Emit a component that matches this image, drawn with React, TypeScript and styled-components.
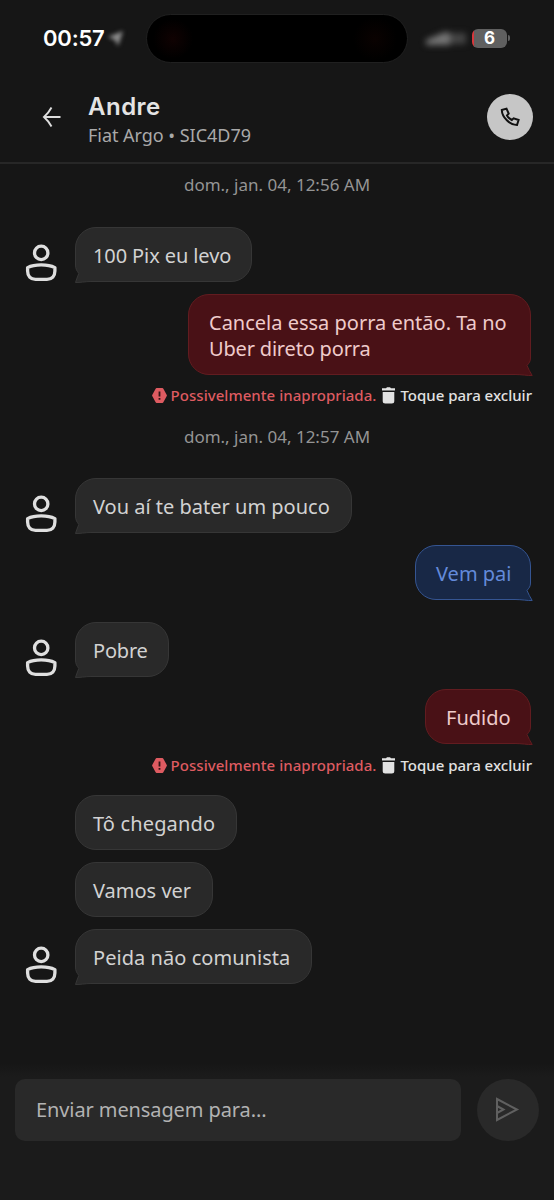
import React from 'react';
import styled, { createGlobalStyle, css } from 'styled-components';

const GlobalStyle = createGlobalStyle`
  * { box-sizing: border-box; }
  body { margin: 0; background: #161616; font-family: "Noto Sans", "Open Sans", sans-serif; }
`;

type Tone = 'incoming' | 'outgoing' | 'flagged';

const tones: Record<Tone, { fill: string; stroke: string; text: string }> = {
  incoming: { fill: '#292929', stroke: '#363636', text: '#d2d2d2' },
  outgoing: { fill: '#182846', stroke: '#355592', text: '#638ada' },
  flagged: { fill: '#491116', stroke: '#621c20', text: '#efcbcb' },
};

const Screen = styled.div`
  display: flex;
  flex-direction: column;
  width: 554px;
  height: 1200px;
  overflow: hidden;
  background: #161616;
`;

const StatusBar = styled.div`
  display: grid;
  grid-template-columns: 146px 262px 1fr;
  align-items: center;
  height: 76px;
`;

const Clock = styled.div`
  display: flex;
  align-items: center;
  padding-left: 43px;
  font: 600 22px/26px Inter, sans-serif;
  letter-spacing: -0.2px;
  color: #fff;
`;

const LocationIcon = styled.svg`
  margin-left: 2px;
  flex: none;
  filter: blur(2.2px);
`;

const Island = styled.div`
  height: 49px;
  border: 1px solid #202020;
  border-radius: 25px;
  background:
    radial-gradient(circle at 26px 24px, #100202 0, transparent 20px),
    radial-gradient(circle at 228px 24px, #0a0201 0, transparent 22px),
    #000;
`;

const StatusIcons = styled.div`
  display: flex;
  align-items: center;
  padding-left: 15px;
`;

const SignalIcon = styled.svg`
  filter: blur(3px);
  flex: none;
`;

const Battery = styled.div`
  width: 35px;
  height: 19px;
  margin-left: 1px;
  border-radius: 6px;
  background: linear-gradient(to right, #d8383c 2px, #606060 2px);
  font: 700 17px/19px Inter, sans-serif;
  color: #fff;
  text-align: center;
`;

const BatteryCap = styled.div`
  width: 2px;
  height: 6px;
  margin-left: 1px;
  border-radius: 0 2px 2px 0;
  background: #606060;
`;

const Header = styled.header`
  display: flex;
  align-items: center;
  height: 88px;
  padding: 0 21px 4px 42px;
  border-bottom: 2px solid #272727;
`;

const Contact = styled.div`
  flex: 1;
  margin-left: 26px;
  padding-top: 5px;
`;

const ContactName = styled.h1`
  margin: 0;
  font: 600 24px/30px Inter, sans-serif;
  letter-spacing: 0.5px;
  color: #e4e4e4;
`;

const Vehicle = styled.div`
  font-size: 18px;
  line-height: 26px;
  letter-spacing: -0.03px;
  color: #a9a9a9;
`;

const CallButton = styled.button`
  display: grid;
  place-items: center;
  width: 46px;
  height: 46px;
  padding: 0;
  border: 0;
  border-radius: 50%;
  background: #c6c6c6;
`;

const Thread = styled.main`
  flex: 1;
  display: flex;
  flex-direction: column;
  padding-top: 9px;
`;

const DateLabel = styled.div<{ $space: number }>`
  height: 24px;
  margin-bottom: ${p => p.$space}px;
  font-size: 17px;
  line-height: 24px;
  text-align: center;
  color: #949494;
`;

const MessageRow = styled.div<{ $own?: boolean; $gap: number }>`
  display: flex;
  justify-content: ${p => (p.$own ? 'flex-end' : 'flex-start')};
  align-items: flex-end;
  margin-bottom: ${p => p.$gap}px;
  padding: 0 23px 0 25px;
`;

const AvatarSlot = styled.div`
  width: 50px;
  height: 38px;
  flex: none;
`;

const Bubble = styled.div<{ $tone: Tone; $width: number; $tracking: number; $tail: boolean }>`
  position: relative;
  width: ${p => p.$width}px;
  padding: ${p => (p.$tone === 'incoming' ? '15px 0 12px 17px' : '15px 0 12px 20px')};
  border: 1px solid ${p => tones[p.$tone].stroke};
  border-radius: 21px;
  ${p => p.$tail && (p.$tone === 'incoming' ? 'border-bottom-left-radius: 0;' : 'border-bottom-right-radius: 0;')}
  background: ${p => tones[p.$tone].fill};
  color: ${p => tones[p.$tone].text};
  font-size: 20px;
  line-height: 26px;
  letter-spacing: ${p => p.$tracking}px;
  white-space: nowrap;
`;

const TextLine = styled.div<{ $tracking?: number }>`
  letter-spacing: ${p => p.$tracking ?? 0}px;
`;

const TailSvg = styled.svg<{ $own: boolean }>`
  position: absolute;
  bottom: -3px;
  ${p =>
    p.$own
      ? css`
          right: -3px;
          transform: scaleX(-1);
        `
      : css`
          left: -3px;
        `}
`;

const Notice = styled.div<{ $gap: number }>`
  display: flex;
  align-items: center;
  justify-content: flex-end;
  height: 18px;
  margin-bottom: ${p => p.$gap}px;
  padding-right: 22px;
  font-size: 15px;
  font-weight: 500;
  line-height: 18px;
`;

const Warning = styled.span`
  margin: 0 6px 0 4px;
  letter-spacing: 0.04px;
  color: #de5b61;
`;

const DeleteAction = styled.span`
  margin-left: 5px;
  color: #e2e2e2;
`;

const Composer = styled.footer`
  display: flex;
  align-items: flex-start;
  gap: 16px;
  height: 137px;
  padding: 16px 15px 0;
  background: linear-gradient(#161616, #1b1b1b 14px);
`;

const MessageField = styled.div`
  width: 446px;
  height: 62px;
  padding-left: 21px;
  border-radius: 10px;
  background: #292929;
  font-size: 20px;
  line-height: 61px;
  letter-spacing: -0.1px;
  color: #b2b2b2;
`;

const SendButton = styled.button`
  display: grid;
  place-items: center;
  width: 62px;
  height: 62px;
  padding: 0 2px 2px 0;
  border: 0;
  border-radius: 50%;
  background: #292929;
`;

function Avatar() {
  return (
    <svg width="32" height="38" viewBox="0 0 32 38" fill="none" stroke="#dfdfdf" strokeWidth="3.3" strokeLinejoin="round">
      <circle cx="16.2" cy="8.9" r="6.7" />
      <path d="M2.6 23.6C9.5 20 22.9 20 29.9 23.6V27C29.9 32 27 35.3 22 35.3H10.5C5.5 35.3 2.6 32 2.6 27Z" />
    </svg>
  );
}

function Tail({ tone }: { tone: Tone }) {
  const { fill, stroke } = tones[tone];
  const own = tone !== 'incoming';
  const edge = own
    ? 'M2.5 0V7C2.5 10.5 4 12 6 14.5C4.5 18 3 21 0.8 24.5C6 24.7 11 23.5 18 23.5'
    : 'M2.5 0V7C2.5 11 4 13 5.8 15.5C4.5 18.5 3.5 21.5 2.5 24.5C7 24.7 12 23.5 18 23.5';
  return (
    <TailSvg $own={own} width="18" height="26" viewBox="0 0 18 26">
      <path d="M0 0H18V26H0Z" fill="#161616" />
      <path d={`${edge}V0Z`} fill={fill} />
      <path d={edge} fill="none" stroke={stroke} />
    </TailSvg>
  );
}

interface MessageProps {
  tone?: Tone;
  width: number;
  tail?: boolean;
  tracking?: number;
  gap?: number;
  children: React.ReactNode;
}

function Message({ tone = 'incoming', width, tail = true, tracking = 0, gap = 12, children }: MessageProps) {
  const own = tone !== 'incoming';
  return (
    <MessageRow $own={own} $gap={gap}>
      {!own && <AvatarSlot>{tail && <Avatar />}</AvatarSlot>}
      <Bubble $tone={tone} $width={width} $tracking={tracking} $tail={tail}>
        {tail && <Tail tone={tone} />}
        {children}
      </Bubble>
    </MessageRow>
  );
}

function FlaggedNotice({ gap }: { gap: number }) {
  return (
    <Notice $gap={gap}>
      <svg width="15" height="15" viewBox="0 0 15 15">
        <path d="M4.6 1.2H10.4L13.8 7.5L10.4 13.8H4.6L1.2 7.5Z" fill="#de5b61" stroke="#de5b61" strokeWidth="2.2" strokeLinejoin="round" />
        <path d="M7.5 3.5V8.5M7.5 9.9V11.7" stroke="#331416" strokeWidth="1.8" />
      </svg>
      <Warning>Possivelmente inapropriada.</Warning>
      <svg width="13" height="17" viewBox="0 0 13 17" fill="#e2e2e2">
        <path d="M0 1.2H4L5 0.3H8L9 1.2H13V3.6H0ZM0.7 5H12.3V14Q12.3 16.5 9.8 16.5H3.2Q0.7 16.5 0.7 14Z" />
      </svg>
      <DeleteAction>Toque para excluir</DeleteAction>
    </Notice>
  );
}

export default function App() {
  return (
    <Screen>
      <GlobalStyle />
      <StatusBar>
        <Clock>
          00:57
          <LocationIcon width="18" height="18" viewBox="0 0 18 18">
            <path d="M1 8L16 2L11 17L8 11Z" fill="#919191" />
          </LocationIcon>
        </Clock>
        <Island />
        <StatusIcons>
          <SignalIcon width="48" height="20" viewBox="0 0 48 20">
            <path d="M3 17V12L22 4L27 5V17Z" fill="#757575" />
            <path d="M27 5H43V16H27Z" fill="#444" />
          </SignalIcon>
          <Battery>6</Battery>
          <BatteryCap />
        </StatusIcons>
      </StatusBar>
      <Header>
        <svg width="20" height="22" viewBox="0 0 20 22" fill="none" stroke="#dedede" strokeWidth="1.9">
          <path d="M18.5 11H2M9.5 1.5Q6.5 7 2 11Q6.500 15 9.5 20.5" />
        </svg>
        <Contact>
          <ContactName>Andre</ContactName>
          <Vehicle>Fiat Argo • SIC4D79</Vehicle>
        </Contact>
        <CallButton aria-label="Ligar">
          <svg width="20" height="20" viewBox="0 0 20 20" fill="none" stroke="#111" strokeWidth="2">
            <path d="M1.8 3L6.5 1.6L8.7 6.6L7 8.5Q8.5 11.5 11.8 13L13.6 11.3L18.6 13L17 18C10 18 2 10.500 1.8 3Z" />
          </svg>
        </CallButton>
      </Header>
      <Thread>
        <DateLabel $space={30}>dom., jan. 04, 12:56 AM</DateLabel>
        <Message width={177} tracking={-0.1}>100 Pix eu levo</Message>
        <Message tone="flagged" width={343} gap={11}>
          <TextLine>Cancela essa porra então. Ta no</TextLine>
          <TextLine $tracking={-0.18}>Uber direto porra</TextLine>
        </Message>
        <FlaggedNotice gap={21} />
        <DateLabel $space={29}>dom., jan. 04, 12:57 AM</DateLabel>
        <Message width={277}>Vou aí te bater um pouco</Message>
        <Message tone="outgoing" width={116} gap={22}>Vem pai</Message>
        <Message width={94} tracking={-0.2}>Pobre</Message>
        <Message tone="flagged" width={106}>Fudido</Message>
        <FlaggedNotice gap={21} />
        <Message width={162} tail={false} tracking={0.15}>Tô chegando</Message>
        <Message width={138} tail={false}>Vamos ver</Message>
        <Message width={237} tracking={0.05}>Peida não comunista</Message>
      </Thread>
      <Composer>
        <MessageField>Enviar mensagem para...</MessageField>
        <SendButton aria-label="Enviar">
          <svg width="25" height="25" viewBox="0 0 25 25" fill="none" stroke="#606060" strokeWidth="2">
            <path d="M2 2L22 12.5L2 23ZM2 9L8.500 12.5L2 16" />
          </svg>
        </SendButton>
      </Composer>
    </Screen>
  );
}
